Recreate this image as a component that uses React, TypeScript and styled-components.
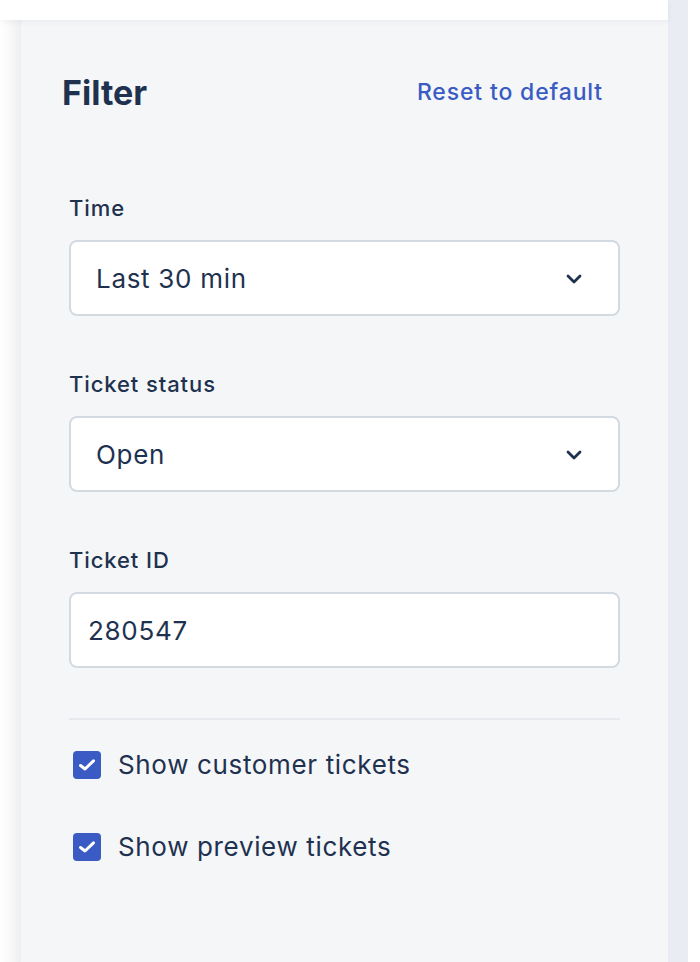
import React, { useState } from "react";
import styled, { createGlobalStyle } from "styled-components";

const GlobalStyle = createGlobalStyle`
  html, body {
    margin: 0;
    padding: 0;
    background: #ffffff;
  }
  body {
    font-family: Inter, "Noto Sans", sans-serif;
    color: #1e3250;
    -webkit-font-smoothing: antialiased;
  }
  * {
    box-sizing: border-box;
  }
`;

const Page = styled.div`
  display: flex;
  height: 962px;
  overflow: hidden;
`;

const Main = styled.div`
  width: 668px;
  display: flex;
  flex-direction: column;
`;

const TopBar = styled.div`
  height: 20px;
  flex-shrink: 0;
  background: #ffffff;
  box-shadow: 0 2px 5px rgba(30, 50, 80, 0.06);
  position: relative;
  z-index: 2;
`;

const Body = styled.div`
  flex: 1;
  display: flex;
`;

const Gutter = styled.div`
  width: 21px;
  background: linear-gradient(to right, #ffffff 0%, #f9f9f9 45%, #efeff1 100%);
`;

const Panel = styled.aside`
  flex: 1;
  background: #f5f6f8;
  padding-top: 53px;
`;

const ScrollTrack = styled.div`
  width: 20px;
  background: #e9ecf2;
`;

const Header = styled.div`
  display: flex;
  align-items: center;
  justify-content: space-between;
  padding: 0 65px 0 41px;
`;

const Title = styled.h2`
  margin: 0;
  font-size: 34px;
  line-height: 40px;
  font-weight: 700;
  color: #1e3250;
`;

const ResetLink = styled.button`
  border: none;
  background: none;
  padding: 0;
  margin-top: -2px;
  font-family: inherit;
  font-size: 23px;
  line-height: 28px;
  font-weight: 500;
  letter-spacing: 0.85px;
  color: #3a5bc4;
  cursor: pointer;
`;

const Form = styled.form`
  margin-top: 83px;
  padding: 0 48px;
  display: flex;
  flex-direction: column;
`;

const Field = styled.div`
  display: flex;
  flex-direction: column;
  & + & {
    margin-top: 56px;
  }
`;

const Label = styled.label`
  font-size: 22px;
  line-height: 24px;
  font-weight: 500;
  letter-spacing: 0.9px;
  color: #1e3250;
  margin-bottom: 20px;
`;

const SelectWrap = styled.div`
  position: relative;
`;

const controlBase = `
  width: 100%;
  height: 76px;
  border: 2px solid #d4dae2;
  border-radius: 8px;
  background: #ffffff;
  font-family: Inter, "Noto Sans", sans-serif;
  font-size: 26px;
  letter-spacing: 0.7px;
  color: #1e3250;
  outline: none;
`;

const Select = styled.select`
  ${controlBase}
  appearance: none;
  -webkit-appearance: none;
  padding: 0 60px 0 25px;
`;

const Chevron = styled.svg`
  position: absolute;
  right: 38px;
  top: 34px;
  pointer-events: none;
`;

const TextInput = styled.input`
  ${controlBase}
  padding: 0 17px;
`;

const Divider = styled.hr`
  margin: 50px 0 31px;
  border: none;
  height: 2px;
  background: #e7e9ef;
`;

const CheckRow = styled.label`
  display: flex;
  align-items: center;
  gap: 17px;
  padding-left: 4px;
  cursor: pointer;
  & + & {
    margin-top: 54px;
  }
`;

const HiddenInput = styled.input`
  position: absolute;
  opacity: 0;
  width: 0;
  height: 0;
`;

const Box = styled.span<{ $checked: boolean }>`
  width: 28px;
  height: 28px;
  border-radius: 4px;
  display: flex;
  align-items: center;
  justify-content: center;
  background: ${(p) => (p.$checked ? "#3a5bc4" : "#ffffff")};
  border: ${(p) => (p.$checked ? "none" : "2px solid #c9d0da")};
`;

const CheckText = styled.span`
  font-size: 26px;
  line-height: 28px;
  letter-spacing: 0.65px;
  color: #1e3250;
`;

const ChevronDown = () => (
  <Chevron width="16" height="10" viewBox="0 0 16 10" fill="none">
    <polyline
      points="2,2 8,8 14,2"
      stroke="#1e3250"
      strokeWidth="2.8"
      strokeLinecap="round"
      strokeLinejoin="round"
    />
  </Chevron>
);

const Checkbox: React.FC<{
  label: string;
  checked: boolean;
  onChange: (v: boolean) => void;
}> = ({ label, checked, onChange }) => (
  <CheckRow>
    <HiddenInput
      type="checkbox"
      checked={checked}
      onChange={(e) => onChange(e.target.checked)}
    />
    <Box $checked={checked}>
      {checked && (
        <svg width="18" height="14" viewBox="0 0 18 14" fill="none">
          <polyline
            points="2.5,7.5 7,11 15.5,2.8"
            stroke="#ffffff"
            strokeWidth="3"
            strokeLinecap="round"
            strokeLinejoin="round"
          />
        </svg>
      )}
    </Box>
    <CheckText>{label}</CheckText>
  </CheckRow>
);

const App: React.FC = () => {
  const [time, setTime] = useState("30m");
  const [status, setStatus] = useState("open");
  const [ticketId, setTicketId] = useState("280547");
  const [showCustomer, setShowCustomer] = useState(true);
  const [showPreview, setShowPreview] = useState(true);

  const reset = () => {
    setTime("30m");
    setStatus("open");
    setTicketId("");
    setShowCustomer(true);
    setShowPreview(true);
  };

  return (
    <>
      <GlobalStyle />
      <Page>
        <Main>
          <TopBar />
          <Body>
            <Gutter />
            <Panel>
              <Header>
                <Title>Filter</Title>
                <ResetLink type="button" onClick={reset}>
                  Reset to default
                </ResetLink>
              </Header>
              <Form onSubmit={(e) => e.preventDefault()}>
                <Field>
                  <Label htmlFor="time">Time</Label>
                  <SelectWrap>
                    <Select
                      id="time"
                      value={time}
                      onChange={(e) => setTime(e.target.value)}
                    >
                      <option value="30m">Last 30 min</option>
                      <option value="1h">Last hour</option>
                      <option value="24h">Last 24 hours</option>
                    </Select>
                    <ChevronDown />
                  </SelectWrap>
                </Field>
                <Field>
                  <Label htmlFor="status">Ticket status</Label>
                  <SelectWrap>
                    <Select
                      id="status"
                      value={status}
                      onChange={(e) => setStatus(e.target.value)}
                    >
                      <option value="open">Open</option>
                      <option value="pending">Pending</option>
                      <option value="closed">Closed</option>
                    </Select>
                    <ChevronDown />
                  </SelectWrap>
                </Field>
                <Field>
                  <Label htmlFor="ticket-id">Ticket ID</Label>
                  <TextInput
                    id="ticket-id"
                    value={ticketId}
                    onChange={(e) => setTicketId(e.target.value)}
                  />
                </Field>
                <Divider />
                <Checkbox
                  label="Show customer tickets"
                  checked={showCustomer}
                  onChange={setShowCustomer}
                />
                <Checkbox
                  label="Show preview tickets"
                  checked={showPreview}
                  onChange={setShowPreview}
                />
              </Form>
            </Panel>
          </Body>
        </Main>
        <ScrollTrack />
      </Page>
    </>
  );
};

export default App;
